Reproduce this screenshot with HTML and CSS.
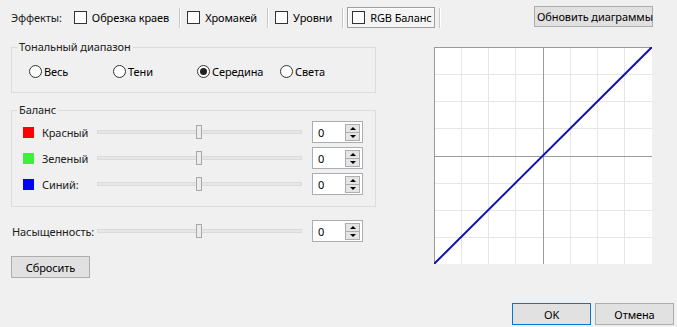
FILE: index.html
```html
<!DOCTYPE html>
<html lang="ru">
<head>
    <meta charset="UTF-8">
    <title>Цветокоррекция</title>
    <link rel="stylesheet" href="styles.css">
</head>
<body>
    <div class="dialog">
        <div class="toolbar">
            <span class="effects-label">Эффекты:</span>
            <label class="tool-item first"><span class="checkbox"></span>Обрезка краев</label>
            <span class="tool-sep"></span>
            <label class="tool-item"><span class="checkbox"></span>Хромакей</label>
            <span class="tool-sep"></span>
            <label class="tool-item"><span class="checkbox"></span>Уровни</label>
            <span class="tool-sep"></span>
            <label class="tool-item pressed"><span class="checkbox"></span>RGB Баланс</label>
            <span class="tool-sep"></span>
            <button class="btn refresh-button">Обновить диаграммы</button>
        </div>

        <div class="content">
            <div class="left-column">
                <fieldset class="group tonal-group">
                    <legend>Тональный диапазон</legend>
                    <div class="radio-row">
                        <label class="radio-item"><span class="radio"></span>Весь</label>
                        <label class="radio-item"><span class="radio"></span>Тени</label>
                        <label class="radio-item"><span class="radio checked"></span>Середина</label>
                        <label class="radio-item"><span class="radio"></span>Света</label>
                    </div>
                </fieldset>

                <fieldset class="group balance-group">
                    <legend>Баланс</legend>
                    <div class="slider-row">
                        <span class="swatch red"></span>
                        <span class="row-label">Красный</span>
                        <div class="slider"><span class="thumb"></span></div>
                        <div class="spin"><span class="spin-value">0</span><span class="spin-arrows"><span class="arrow up"></span><span class="arrow down"></span></span></div>
                    </div>
                    <div class="slider-row">
                        <span class="swatch green"></span>
                        <span class="row-label">Зеленый</span>
                        <div class="slider"><span class="thumb"></span></div>
                        <div class="spin"><span class="spin-value">0</span><span class="spin-arrows"><span class="arrow up"></span><span class="arrow down"></span></span></div>
                    </div>
                    <div class="slider-row">
                        <span class="swatch blue"></span>
                        <span class="row-label">Синий:</span>
                        <div class="slider"><span class="thumb"></span></div>
                        <div class="spin"><span class="spin-value">0</span><span class="spin-arrows"><span class="arrow up"></span><span class="arrow down"></span></span></div>
                    </div>
                </fieldset>

                <div class="slider-row saturation-row">
                    <span class="row-label wide">Насыщенность:</span>
                    <div class="slider"><span class="thumb"></span></div>
                    <div class="spin"><span class="spin-value">0</span><span class="spin-arrows"><span class="arrow up"></span><span class="arrow down"></span></span></div>
                </div>

                <button class="btn reset-button">Сбросить</button>
            </div>

            <div class="chart">
                <svg width="218" height="217" viewBox="0 0 218 217">
                    <rect x="0" y="0" width="218" height="217" fill="#fff"/>
                    <g stroke="#e6e6e6" stroke-width="1">
                        <line x1="27.5" y1="0" x2="27.5" y2="217"/>
                        <line x1="54.5" y1="0" x2="54.5" y2="217"/>
                        <line x1="81.5" y1="0" x2="81.5" y2="217"/>
                        <line x1="136.5" y1="0" x2="136.5" y2="217"/>
                        <line x1="163.5" y1="0" x2="163.5" y2="217"/>
                        <line x1="190.5" y1="0" x2="190.5" y2="217"/>
                        <line x1="0" y1="27.5" x2="218" y2="27.5"/>
                        <line x1="0" y1="54.5" x2="218" y2="54.5"/>
                        <line x1="0" y1="81.5" x2="218" y2="81.5"/>
                        <line x1="0" y1="136.5" x2="218" y2="136.5"/>
                        <line x1="0" y1="163.5" x2="218" y2="163.5"/>
                        <line x1="0" y1="190.5" x2="218" y2="190.5"/>
                    </g>
                    <g stroke="#9a9a9a" stroke-width="1">
                        <line x1="109.5" y1="0" x2="109.5" y2="217"/>
                        <line x1="0" y1="109.5" x2="218" y2="109.5"/>
                        <line x1="0.5" y1="0" x2="0.5" y2="217"/>
                        <line x1="0" y1="0.5" x2="218" y2="0.5"/>
                    </g>
                    <line x1="0" y1="217" x2="218" y2="0" stroke="#1010b4" stroke-width="2"/>
                </svg>
            </div>
        </div>

        <div class="footer">
            <button class="btn ok-button">OK</button>
            <button class="btn">Отмена</button>
        </div>
    </div>
</body>
</html>
```

FILE: styles.css
```css
body {
    margin: 0;
    padding: 0;
    background-color: #f0f0f0;
    font-family: "Noto Sans", sans-serif;
    font-size: 11px;
    letter-spacing: -0.1px;
    color: #000;
}

.dialog {
    width: 677px;
    height: 327px;
    display: flex;
    flex-direction: column;
}

/* верхняя панель эффектов */
.toolbar {
    display: flex;
    align-items: center;
    height: 35px;
    padding-left: 11px;
}

.effects-label {
    color: #202020;
    margin-right: 12px;
}

.tool-item {
    display: flex;
    align-items: center;
    padding: 0 10px 0 7px;
}

.tool-item.first {
    padding-left: 0;
}

.tool-item.pressed {
    margin: 0 4px 0 4px;
    padding: 0 2px 0 4px;
    height: 19px;
    border: 1px solid #a0a0a0;
    box-shadow: inset 1px 1px 0 #fff;
    background-color: #f4f4f4;
}

.tool-sep {
    width: 1px;
    height: 20px;
    background-color: #c8c8c8;
    box-shadow: 1px 0 0 #fff;
}

.checkbox {
    display: inline-block;
    width: 11px;
    height: 11px;
    border: 1px solid #333;
    background-color: #fff;
    margin-right: 5px;
}

.btn {
    font-family: "Noto Sans", sans-serif;
    font-size: 11px;
    letter-spacing: -0.1px;
    color: #000;
    background-color: #e1e1e1;
    border: 1px solid #adadad;
    height: 21px;
    padding: 0 2px;
    white-space: nowrap;
    box-sizing: border-box;
    cursor: pointer;
}

.refresh-button {
    margin-left: auto;
    margin-right: 24px;
    margin-top: -3px;
    width: 119px;
}

/* основная часть */
.content {
    display: flex;
    margin-top: 5px;
}

.left-column {
    width: 365px;
    margin-left: 11px;
}

.group {
    margin: 0;
    padding: 0;
    border: 1px solid #dcdcdc;
    min-width: 0;
}

.group legend {
    padding: 0 2px;
    margin-left: 5px;
    line-height: 14px;
    color: #202020;
}

.tonal-group {
    height: 51px;
}

.radio-row {
    display: grid;
    grid-template-columns: 84px 84px 83px 84px;
    margin-top: 10px;
    margin-left: 17px;
}

.radio-item {
    display: flex;
    align-items: center;
}

.radio {
    display: inline-block;
    width: 11px;
    height: 11px;
    border: 1px solid #333;
    border-radius: 50%;
    background-color: #fff;
    margin-right: 2px;
    position: relative;
}

.radio.checked::after {
    content: "";
    position: absolute;
    left: 2px;
    top: 2px;
    width: 7px;
    height: 7px;
    border-radius: 50%;
    background-color: #222;
}

.balance-group {
    margin-top: 10px;
    height: 100px;
    padding-top: 2px;
}

.balance-group .slider-row {
    margin-left: 11px;
}

.slider-row {
    display: flex;
    align-items: center;
    height: 26px;
}

.swatch {
    width: 11px;
    height: 11px;
    margin-right: 8px;
}

.swatch.red { background-color: #ff0000; }
.swatch.green { background-color: #3cf03c; }
.swatch.blue { background-color: #0000ff; }

.row-label {
    width: 55px;
    color: #202020;
}

.row-label.wide {
    width: 85px;
    padding-left: 1px;
}

.slider {
    position: relative;
    width: 203px;
    height: 2px;
    border: 1px solid #dadada;
    background-color: #e7e7e7;
}

.thumb {
    position: absolute;
    left: 98px;
    top: -6px;
    width: 4px;
    height: 12px;
    border: 1px solid #a8a8a8;
    background-color: #ececec;
}

.spin {
    display: flex;
    align-items: center;
    justify-content: space-between;
    margin-left: 10px;
    width: 49px;
    height: 20px;
    border: 1px solid #abadb3;
    background-color: #fff;
}

.spin-value {
    padding-left: 5px;
}

.spin-arrows {
    display: flex;
    flex-direction: column;
    margin-right: 2px;
}

.arrow {
    position: relative;
    width: 13px;
    height: 7px;
    border: 1px solid #adadad;
    background-color: #e5e5e5;
}

.arrow.down {
    border-top: none;
}

.arrow::after {
    content: "";
    position: absolute;
    left: 4px;
    border-left: 3px solid transparent;
    border-right: 3px solid transparent;
}

.arrow.up::after {
    top: 2px;
    border-bottom: 3px solid #000;
}

.arrow.down::after {
    top: 2px;
    border-top: 3px solid #000;
}

.saturation-row {
    margin-top: 11px;
    height: 26px;
}

.reset-button {
    margin-top: 12px;
    width: 79px;
    height: 22px;
}

.chart {
    margin-left: 58px;
    margin-top: 7px;
    line-height: 0;
}

/* кнопки внизу */
.footer {
    display: flex;
    justify-content: flex-end;
    gap: 4px;
    margin-top: auto;
    padding-right: 3px;
    padding-bottom: 2px;
}

.footer .btn {
    width: 79px;
    height: 22px;
}

.ok-button {
    border-color: #0078d7;
}
```
